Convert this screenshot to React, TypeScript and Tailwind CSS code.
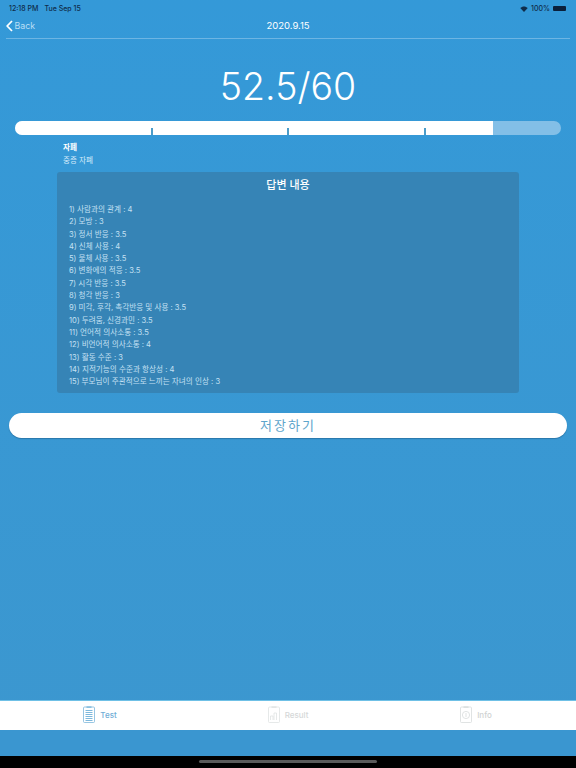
const answers = [
  "1) 사람과의 관계 : 4",
  "2) 모방 : 3",
  "3) 정서 반응 : 3.5",
  "4) 신체 사용 : 4",
  "5) 물체 사용 : 3.5",
  "6) 변화에의 적응 : 3.5",
  "7) 시각 반응 : 3.5",
  "8) 청각 반응 : 3",
  "9) 미각, 후각, 촉각반응 및 사용 : 3.5",
  "10) 두려움, 신경과민 : 3.5",
  "11) 언어적 의사소통 : 3.5",
  "12) 비언어적 의사소통 : 4",
  "13) 활동 수준 : 3",
  "14) 지적기능의 수준과 항상성 : 4",
  "15) 부모님이 주관적으로 느끼는 자녀의 인상 : 3",
];

function TabIcon({ kind, color }: { kind: "test" | "result" | "info"; color: string }) {
  return (
    <svg width="12" height="17" viewBox="0 0 12 17" fill="none" stroke={color} strokeWidth="0.8">
      <rect x="0.5" y="1" width="11" height="15.5" rx="1" />
      <rect x="3.5" y="0.4" width="5" height="1.4" fill={color} stroke="none" />
      {kind === "test" && (
        <path d="M2.5 4.5h7M2.5 6.5h7M2.5 8.5h7M2.5 10.5h7M2.5 12.5h7M2.5 14.5h7" strokeWidth="1" />
      )}
      {kind === "result" && <path d="M2.5 14v-4h2.5v4M6 14v-7h2.5v7" strokeWidth="0.8" />}
      {kind === "info" && (
        <>
          <circle cx="6" cy="9" r="3.6" />
          <path d="M6 7v4" />
        </>
      )}
    </svg>
  );
}

function Tab({ kind, label, color, textColor }: { kind: "test" | "result" | "info"; label: string; color: string; textColor: string }) {
  return (
    <div className="flex flex-1 items-center justify-center gap-[5px] pb-[2px]">
      <TabIcon kind={kind} color={color} />
      <span className={`text-[8px] font-medium ${textColor}`}>{label}</span>
    </div>
  );
}

export default function App() {
  return (
    <div
      className="flex h-[768px] w-[576px] flex-col overflow-hidden bg-gradient-to-b from-[#3499d8] to-[#3c97cf] text-white"
      style={{ fontFamily: '"Inter", "Noto Sans CJK KR", sans-serif' }}
    >
      <div className="flex h-[14px] items-end justify-between pl-[9px] pr-[10px] text-[7px] font-medium text-[#0f2c4a]">
        <div className="flex gap-[6px]">
          <span>12:18 PM</span>
          <span>Tue Sep 15</span>
        </div>
        <div className="flex items-center gap-[3px]">
          <svg width="8" height="6" viewBox="0 0 16 12" fill="#0f2c4a">
            <path d="M8 12 0.5 4.2C4.8 0 11.2 0 15.5 4.2Z" />
          </svg>
          <span>100%</span>
          <div className="h-[5px] w-[13px] rounded-[1px] bg-[#0a1f3a]" />
        </div>
      </div>

      <div className="relative mx-[6px] flex h-[25px] items-center border-b border-[#6db5e3]">
        <div className="flex items-center gap-[1.5px] text-[#b9def5]">
          <svg width="7" height="12" viewBox="0 0 7 12" fill="none" stroke="#ffffff" strokeWidth="1.7">
            <path d="M6 1 1.2 6 6 11" />
          </svg>
          <span className="text-[8.8px]">Back</span>
        </div>
        <span className="absolute inset-x-0 text-center text-[9.5px]">2020.9.15</span>
      </div>

      <div className="mt-[24px] h-[48px] text-center text-[37.5px] leading-[48px] font-light">52.5/60</div>

      <div className="mx-[15px] mt-[10px] flex h-[14px] overflow-hidden rounded-full bg-[#83bfe7]">
        <div className="flex h-full w-[478px] items-end bg-white pl-[135.5px]">
          <div className="h-[7px] w-[2px] bg-[#4b9cc9]" />
          <div className="ml-[134.5px] h-[7px] w-[2px] bg-[#4b9cc9]" />
          <div className="ml-[134.5px] h-[7px] w-[2px] bg-[#4b9cc9]" />
        </div>
      </div>

      <div className="mt-[6px] ml-[63px] text-[7.6px] leading-[13px]">
        <div className="font-semibold">자폐</div>
        <div className="text-[#d3eafa]">중증 자폐</div>
      </div>

      <div className="mx-[57px] mt-[5px] h-[221px] rounded-[3px] bg-[#3684b6] px-[12px] pt-[6px]">
        <div className="text-center text-[11px] leading-[15px] font-medium">답변 내용</div>
        <div className="mt-[11px] text-[7.6px] leading-[12.3px] text-[#c4e0f3]">
          {answers.map((answer) => (
            <div key={answer}>{answer}</div>
          ))}
        </div>
      </div>

      <button
        type="button"
        className="mx-[9px] mt-[20px] h-[25px] rounded-full bg-white text-[13px] tracking-[2px] text-[#5ea5cb] shadow-[0_1px_1px_rgba(20,70,110,0.4)]"
      >
        저장하기
      </button>

      <div className="mt-[262px] flex h-[30px] border-t border-[#6fc0e6] bg-white px-[6px]">
        <Tab kind="test" label="Test" color="#7db8dc" textColor="text-[#6fadd6]" />
        <Tab kind="result" label="Result" color="#dfe3e3" textColor="text-[#d5d8d8]" />
        <Tab kind="info" label="Info" color="#d8dcdc" textColor="text-[#cfd2d2]" />
      </div>

      <div className="h-[26px] bg-[#3a96d0]" />
      <div className="flex flex-1 items-start justify-center bg-black pt-[4px]">
        <div className="h-[3px] w-[178px] rounded-full bg-[#5a5a5a]" />
      </div>
    </div>
  );
}
